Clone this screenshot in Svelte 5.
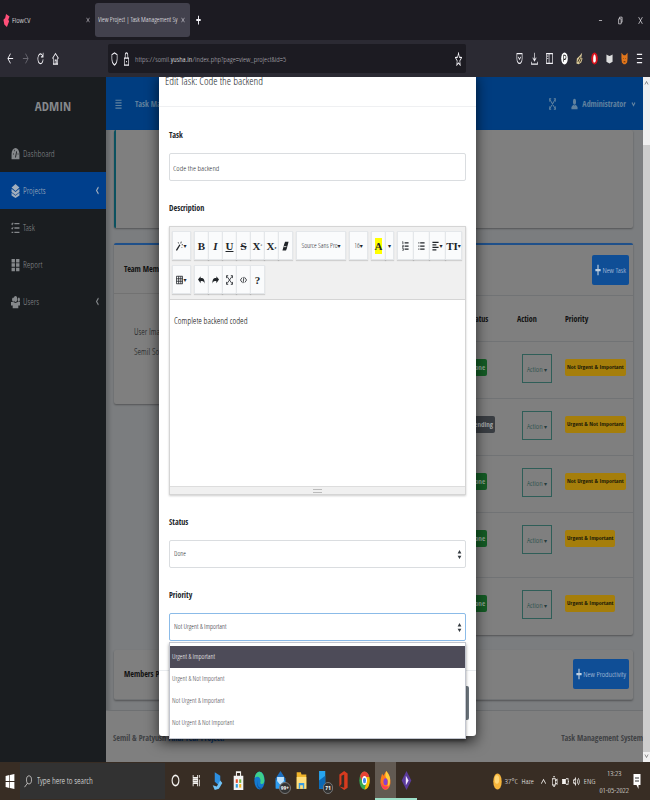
<script>
  const icons = {
    back: '<path d="M14 8H2M8 2L2 8l6 6"/>',
    forward: '<path d="M2 8h12M8 2l6 6-6 6"/>',
    reload: '<path d="M13 5A6 6 0 1 0 14 9M14 1v5H9"/>',
    home: '<path d="M1 8l7-6 7 6M3 7v8h10V7M7 15v-5h3v5"/>',
    shield: '<path d="M8 1l6 2v5c0 4-3 6-6 7-3-1-6-3-6-7V3z"/>',
    lock: '<path d="M3 7h10v8H3zM5 7V4a3 3 0 0 1 6 0v3M7 11h2"/>',
    star: '<path d="M8 1l2 5 5 .5-4 3.500 1 5L8 12.500 4 15l1-5-4-3.500L6 6z"/>',
    pocket: '<path d="M2 2h12v6a6 6 0 0 1-12 0zM5 6l3 3 3-3"/>',
    download: '<path d="M8 1v10M4 7l4 4 4-4M1 12v3h14v-3"/>',
    sidebar: '<path d="M1 2h14v12H1zM7 2v12M3 5h2M3 8h2"/>',
    parking: '<circle cx="8" cy="8" r="7.500" fill="#fff" stroke="none"/><path stroke="#222" d="M6 12V4h3a2 2 0 0 1 0 5H6"/>',
    bee: '<path fill="#d9c99a" stroke="none" d="M2 8l6-3 6-4-2 6 3 1-3 5-6 2-5-1z"/><path stroke="#3a2c18" d="M4 12l6-6M8 13l4-5"/>',
    adblock: '<circle cx="8" cy="8" r="7.500" fill="#d9121b" stroke="none"/><path fill="#fff" stroke="none" d="M5 7l1-3h1V3h2v1h1l1 3v4l-2 2H6l-1-2z"/>',
    reader: '<path fill="#ddd" stroke="none" d="M1 3l3 1 4 1 4-1 3-1v9l-3 1-4 1-4-1-3-1z"/>',
    fox: '<path fill="#e2761b" stroke="none" d="M1 1l5 3h4l5-3v7l-1 5-4 2H6l-4-2-1-5z"/><path stroke="#5b3212" d="M5 8h1M10 8h1M6 12h4"/>',
    menu: '<path d="M2 3h12M2 8h12M2 13h12"/>',
    bars: '<path d="M1 3h14M1 6.500h14M1 10h14M1 13.500h14"/>',
    minus: '<path d="M3 8h10"/>',
    restore: '<path d="M2 5h8v9H2zM5 5V2h8v9h-3"/>',
    cross: '<path d="M2 2l12 12M14 2L2 14"/>',
    gauge: '<path fill="currentColor" stroke="none" d="M8 1a7 7 0 0 0-7 7v6h14V8a7 7 0 0 0-7-7z"/><path stroke="#1a1d20" d="M8 12l2-7M4 8h1M6 4h1M12 8h1"/>',
    layers: '<path fill="currentColor" stroke="none" d="M8 0l7 4-7 4-7-4zM1 5.500l7 3.500 7-3.500v3.500l-7 3.500L1 9zM1 10l7 3.500 7-3.500v3l-7 3-7-3z"/>',
    tasks: '<path d="M6 3h9M6 8h9M6 13h9M1 3l1 1 2-2M1 8l1 1 2-2M1 13h3"/>',
    grid: '<path fill="currentColor" stroke="none" d="M1 1h6v4H1zM9 1h6v4H9zM1 6h6v4H1zM9 6h6v4H9zM1 11h6v4H1zM9 11h6v4H9z"/>',
    users: '<path fill="currentColor" stroke="none" d="M3 3a2 2.500 0 1 1 0 4.500A2 2.500 0 0 1 3 3zM13 3a2 2.500 0 1 1 0 4.500A2 2.500 0 0 1 13 3zM8 1a3 3.500 0 1 1 0 7 3 3.500 0 0 1 0-7zM0 12V8h4l4 1 4-1h4v4h-3v3H3v-3z"/>',
    user: '<path fill="currentColor" stroke="none" d="M8 1a3.500 4 0 1 1 0 8 3.500 4 0 0 1 0-8zM1 15v-3l4-3 3 1 3-1 4 3v3z"/>',
    expand: '<path d="M2 2l12 12M14 2L2 14M1 5V1h4M11 1h4v4M15 11v4h-4M5 15H1v-4"/>',
    left: '<path d="M11 2L5 8l6 6"/>',
    down: '<path d="M3 5l5 6 5-6"/>',
    up: '<path d="M3 11l5-6 5 6"/>',
    plus: '<path stroke-width="3" d="M8 1v14M1 8h14"/>',
    wand: '<path stroke-width="2.500" d="M1 15l8-9"/><path d="M11 4l1-3M13 6h3M5 2l1 2M13 10l1 1"/>',
    eraser: '<path fill="currentColor" stroke="none" d="M7 1h8l-4 11-2 3H1l4-10z"/><path stroke="#fff" d="M4 9h6"/>',
    ul: '<path stroke-width="2" d="M5 3h10M5 8h10M5 13h10M1 3h2M1 8h2M1 13h2"/>',
    ol: '<path stroke-width="2" d="M6 3h9M6 8h9M6 13h9"/><path d="M1 1h1v4M1 7h2v2H1v1h2M1 12h2v3H1"/>',
    align: '<path stroke-width="2" d="M1 2h14M1 6h9M1 10h14M1 14h9"/>',
    table: '<path d="M1 2h14v12H1zM1 6h14M1 10h14M6 2v12M11 2v12"/>',
    undo: '<path fill="currentColor" stroke="none" d="M0 7l6-5v3c6-1 10 2 9 9-1-4-4-5-9-4v3z"/>',
    redo: '<path fill="currentColor" stroke="none" d="M16 7l-6-5v3C4 4 0 7 1 14c1-4 4-5 9-4v3z"/>',
    code: '<path d="M5 4L1 8l4 4M11 4l4 4-4 4M9 3l-2 10"/>',
    sort: '<path fill="currentColor" stroke="none" d="M8 0l6 6H2zM8 16l6-6H2z"/>',
    flame: '<path fill="#ff4f79" stroke="none" d="M7 0l8 3-3 4 2 2-5 7-6-3-2-6 4-2z"/>',
    windows: '<path fill="#fff" stroke="none" d="M1 3l6-1v6H1zM8 2l7-1v7H8zM1 9h6v6l-6-1zM8 9h7v7l-7-1z"/>',
    search: '<circle cx="10" cy="6" r="5"/><path d="M7 10l-6 5"/>',
    cortana: '<ellipse cx="8" cy="8" rx="6" ry="5.500" stroke-width="2"/>',
    view: '<path d="M2 2v3h8V2M2 14v-3h8v3M2 7h8v2H2zM13 2v3M13 7v7"/>',
    stream: '<path fill="#2d8fe0" stroke="none" d="M4 1l8 3v9l-8-4z"/><path fill="#70c2f5" stroke="none" d="M1 12l6 1 5-5 3 2-5 5-6 1z"/>',
    store: '<path d="M5 5V1h6v4"/><path fill="#f3f3f3" stroke="none" d="M1 4h14v12H1z"/><path fill="#e74c2c" stroke="none" d="M4 7h3v3H4z"/><path fill="#6fb43f" stroke="none" d="M9 7h3v3H9z"/><path fill="#2b9be0" stroke="none" d="M4 11h3v3H4z"/><path fill="#f3b51d" stroke="none" d="M9 11h3v3H9z"/>',
    edge: '<circle cx="8" cy="8" r="7.500" fill="#1479cf" stroke="none"/><path fill="#3ed08b" stroke="none" d="M1 6c2-8 14-7 14 2 0 3-4 4-6 2 2-3-2-7-8-4z"/><path fill="#0b4f9e" stroke="none" d="M6 7c-3 4 1 8 6 7-5 3-10-2-6-7z"/>',
    mail: '<path fill="#1c6fc0" stroke="none" d="M1 6l7-6 7 6v8H1z"/><path fill="#bfe3fb" stroke="none" d="M3 5h10v4l-5 3-5-3z"/><path fill="#2e9df0" stroke="none" d="M1 7l7 5 7-5v8H1z"/>',
    folder: '<path fill="#f0b429" stroke="none" d="M1 1h6l1 2h7v12H1z"/><path fill="#ffdf7e" stroke="none" d="M1 5h14v10H1z"/><path fill="#3a9be0" stroke="none" d="M4 10h8v5h-2v-3H6v3H4z"/>',
    phone: '<path fill="#27a4ee" stroke="none" d="M3 0h9v15H3z"/><path fill="#0c69b5" stroke="none" d="M3 8l9-4v11H3z"/>',
    office: '<path fill="#d83b1f" stroke="none" d="M2 3l7-3 5 2v12l-5 2-7-3 7 1V3L5 4v7l-3 2z"/>',
    chrome: '<circle cx="8" cy="8" r="7.500" fill="#35a853" stroke="none"/><path fill="#e84335" stroke="none" d="M1.500 4.500a7.500 7.500 0 0 1 13.500.5H8L5 9z"/><path fill="#fabb05" stroke="none" d="M15 5a7.500 7.500 0 0 1-7 10.500L11 9 8 5z"/><circle cx="8" cy="8" r="3" fill="#4285f4" stroke="#fff"/>',
    firefox: '<path fill="#ff7a1a" stroke="none" d="M3 2l2 2 4-4c5 3 7 7 6 11-2 6-11 7-14 0C0 7 2 5 3 2z"/><path fill="#ffcf3b" stroke="none" d="M9 0c5 3 7 7 5 11-1 2-3 3-4 3 3-4 2-7-1-8-2-2-1-4 0-6z"/><circle cx="8" cy="9" r="3" fill="#8a3fd0" stroke="none"/><path fill="#ff3d5a" stroke="none" d="M1 9c3 4 8 5 12 3-3 5-10 5-12-3z"/>',
    diamond: '<path fill="#5b3b9d" stroke="none" d="M8 0l7 8-7 8-7-8z"/><path fill="#f2eaff" stroke="none" d="M7 4l4 4-4 4z"/>',
    sun: '<circle cx="8" cy="8" r="7.500" fill="#f6b53c" stroke="none"/><circle cx="7" cy="6" r="4" fill="#ffd778" stroke="none"/>',
    camera: '<path d="M3 4h7v9H3zM10 7l4-2v7l-4-2M5 1h4M5 15h4"/>',
    battery: '<path fill="currentColor" d="M1 5h7v6H1z"/><path d="M9 4h5v8H9M15 7v2"/>',
    sound: '<path d="M1 6h2l3-3v10L3 10H1zM9 5c2 2 2 4 0 6M12 3c3 3 3 7 0 10"/>',
    note: '<path fill="#fff" stroke="none" d="M1 1h14v11h-4v4l-4-4H1z"/><path stroke="#777" d="M4 5h8M4 8h8"/>'
  };
  const extensions = ['pocket', 'download', 'sidebar', 'parking', 'bee', 'adblock', 'reader', 'fox', 'menu'];
  const nav = [
    { name: 'Dashboard', icon: 'gauge' },
    { name: 'Projects', icon: 'layers', active: true, more: true },
    { name: 'Task', icon: 'tasks' },
    { name: 'Report', icon: 'grid' },
    { name: 'Users', icon: 'users', more: true }
  ];
  const tasks = [
    { status: 'Done', priority: 'Not Urgent & Important' },
    { status: 'Pending', priority: 'Urgent & Not Important' },
    { status: 'Done', priority: 'Not Urgent & Important' },
    { status: 'Done', priority: 'Urgent & Important', tall: true },
    { status: 'Done', priority: 'Urgent & Important' }
  ];
  const priorities = ['Urgent & Important', 'Urgent & Not Important', 'Not Urgent & Important', 'Not Urgent & Not Important'];
  const apps = [
    { icon: 'cortana' }, { icon: 'view' }, { icon: 'stream' }, { icon: 'store' }, { icon: 'edge' },
    { icon: 'mail', badge: '99+' }, { icon: 'folder' }, { icon: 'phone', badge: '71' }, { icon: 'office' },
    { icon: 'chrome' }, { icon: 'firefox', open: true, active: true }, { icon: 'diamond', open: true }
  ];
  let taskName = $state('Code the backend');
  let status = $state('Done');
  let priority = $state('Not Urgent & Important');
</script>

{#snippet icon(name)}
  <svg class="icon" viewBox="0 0 16 16" preserveAspectRatio="none" aria-hidden="true">{@html icons[name]}</svg>
{/snippet}

<div class="screen">
  <header class="browser">
    <div class="tabs">
      <div class="tab">
        {@render icon('flame')}<span>FlowCV</span>
        <button class="plain tiny" aria-label="Close tab">{@render icon('cross')}</button>
      </div>
      <div class="tab current">
        <span>View Project | Task Management Sy</span>
        <button class="plain tiny" aria-label="Close tab">{@render icon('cross')}</button>
      </div>
      <button class="plain add" aria-label="New tab">{@render icon('plus')}</button>
      <div class="window">
        <button class="plain" aria-label="Minimize">{@render icon('minus')}</button>
        <button class="plain" aria-label="Restore">{@render icon('restore')}</button>
        <button class="plain" aria-label="Close">{@render icon('cross')}</button>
      </div>
    </div>
    <div class="tools">
      <div class="history">
        <button class="plain" aria-label="Back">{@render icon('back')}</button>
        <button class="plain faded" aria-label="Forward">{@render icon('forward')}</button>
        <button class="plain" aria-label="Reload">{@render icon('reload')}</button>
        <button class="plain" aria-label="Home">{@render icon('home')}</button>
      </div>
      <div class="address">
        {@render icon('shield')}{@render icon('lock')}
        <span class="url">https://somil.<b>yusha.in</b>/index.php?page=view_project&amp;id=5</span>
        <button class="plain" aria-label="Bookmark">{@render icon('star')}</button>
      </div>
      <div class="extensions">
        {#each extensions as name}
          <button class="plain" aria-label={name}>{@render icon(name)}</button>
        {/each}
      </div>
    </div>
  </header>

  <div class="page">
    <aside>
      <div class="brand">ADMIN</div>
      <nav>
        {#each nav as item}
          <a href="#{item.name}" class:active={item.active}>
            {@render icon(item.icon)}<span>{item.name}</span>
            {#if item.more}<i>{@render icon('left')}</i>{/if}
          </a>
        {/each}
      </nav>
    </aside>

    <main>
      <div class="navbar">
        {@render icon('bars')}
        <b class="title">Task Management System</b>
        {@render icon('expand')}
        <span class="account">{@render icon('user')}<b>Administrator</b></span>
        {@render icon('down')}
      </div>
      <div class="content">
        <section class="card info"></section>
        <div class="columns">
          <section class="card outline team">
            <h2>Team Member/s:</h2>
            <p>User Image<br />Semil Soni</p>
          </section>
          <section class="card outline list">
            <div class="head"><button class="primary">{@render icon('plus')}New Task</button></div>
            <table>
              <thead><tr><th></th><th>Status</th><th>Action</th><th>Priority</th></tr></thead>
              <tbody>
                {#each tasks as task}
                  <tr class:tall={task.tall}>
                    <td></td>
                    <td><span class="badge {task.status.toLowerCase()}">{task.status}</span></td>
                    <td class="action"><button class="menu">Action <span>▾</span></button></td>
                    <td><span class="badge warn">{task.priority}</span></td>
                  </tr>
                {/each}
              </tbody>
            </table>
          </section>
        </div>
        <section class="card members">
          <h2>Members Progress</h2>
          <button class="primary">{@render icon('plus')}New Productivity</button>
        </section>
      </div>
      <footer>
        <b>Semil &amp; Pratyush <a href="#project">Final Year Project!</a></b>
        <b>Task Management System</b>
      </footer>
    </main>

    <div class="scroll">
      {@render icon('up')}
      <div class="thumb"></div>
      {@render icon('down')}
    </div>

    <div class="overlay">
      <div class="modal" role="dialog" aria-labelledby="modal-title">
        <h1 id="modal-title">Edit Task: Code the backend</h1>
        <form>
          <div class="field">
            <label for="task">Task</label>
            <input id="task" bind:value={taskName} />
          </div>
          <div class="field">
            <label for="description">Description</label>
            <div class="editor">
              <div class="toolbar">
                <div class="group wide"><button type="button" aria-label="Style">{@render icon('wand')}<em>▾</em></button></div>
                <div class="group">
                  <button type="button"><b>B</b></button>
                  <button type="button"><b class="italic">I</b></button>
                  <button type="button"><b class="under">U</b></button>
                  <button type="button"><b class="strike">S</b></button>
                  <button type="button"><b>X</b><sup>²</sup></button>
                  <button type="button"><b>X</b><sub>₂</sub></button>
                  <button type="button" aria-label="Clear">{@render icon('eraser')}</button>
                </div>
                <div class="group family"><button type="button">Source Sans Pro<em>▾</em></button></div>
                <div class="group wide"><button type="button">16<em>▾</em></button></div>
                <div class="group color"><button type="button"><b class="mark">A</b></button><button type="button" aria-label="More colors"><em>▾</em></button></div>
                <div class="group para">
                  <button type="button" aria-label="Numbers">{@render icon('ol')}</button>
                  <button type="button" aria-label="Bullets">{@render icon('ul')}</button>
                  <button type="button" aria-label="Paragraph">{@render icon('align')}<em>▾</em></button>
                  <button type="button"><b>TI</b><em>▾</em></button>
                </div>
                <div class="group wide"><button type="button" aria-label="Table">{@render icon('table')}<em>▾</em></button></div>
                <div class="group">
                  <button type="button" aria-label="Undo">{@render icon('undo')}</button>
                  <button type="button" aria-label="Redo">{@render icon('redo')}</button>
                  <button type="button" aria-label="Full screen">{@render icon('expand')}</button>
                  <button type="button" aria-label="Code">{@render icon('code')}</button>
                  <button type="button"><b>?</b></button>
                </div>
              </div>
              <textarea id="description">Complete backend coded</textarea>
              <div class="grip"><span></span></div>
            </div>
          </div>
          <div class="field">
            <label for="status">Status</label>
            <div class="select">
              <select id="status" bind:value={status}><option>Pending</option><option>Done</option></select>
              {@render icon('sort')}
            </div>
          </div>
          <div class="field">
            <label for="priority">Priority</label>
            <div class="select focus">
              <select id="priority" bind:value={priority}>
                {#each priorities as p}<option>{p}</option>{/each}
              </select>
              {@render icon('sort')}
              <ul role="listbox" aria-label="Priority">
                {#each priorities as p, i}
                  <li role="option" aria-selected={i === 0} class:hover={i === 0}>{p}</li>
                {/each}
              </ul>
            </div>
          </div>
        </form>
        <div class="modal-foot"><button class="cancel" aria-label="Cancel"></button></div>
      </div>
    </div>
  </div>

  <div class="taskbar">
    <button class="plain start" aria-label="Start">{@render icon('windows')}</button>
    <label class="search">{@render icon('search')}<input aria-label="Search" placeholder="Type here to search" /></label>
    <div class="apps">
      {#each apps as app}
        <button class="plain" class:open={app.open} class:active={app.active} aria-label={app.icon}>
          {@render icon(app.icon)}
          {#if app.badge}<span class="count">{app.badge}</span>{/if}
        </button>
      {/each}
    </div>
    <div class="tray">
      <span class="weather">{@render icon('sun')}37°C&nbsp; Haze</span>
      {@render icon('up')}{@render icon('camera')}{@render icon('battery')}{@render icon('sound')}
      <span>ENG</span>
      <span class="clock">13:23<br />01-05-2022</span>
      {@render icon('note')}
    </div>
  </div>
</div>

<style>
  :global(body) { margin: 0; background: #7b7d7f; }
  .screen, .screen :global(*) { box-sizing: border-box; }
  .screen {
    --bold: "Open Sans Condensed", "Liberation Sans Narrow", "Liberation Sans", sans-serif;
    display: flex; flex-direction: column; min-height: 100vh; overflow: hidden;
    font: 9px/12px "Open Sans Condensed Light", "Noto Sans ExtraCondensed", "Roboto Condensed", "Open Sans Condensed", sans-serif;
    color: #212529;
  }
  button, input, select, textarea { font: inherit; color: inherit; }
  button { padding: 0; white-space: nowrap; }
  .icon { width: 9px; height: 14px; flex: none; fill: none; stroke: currentColor; stroke-width: 1.500; display: block; }
  .plain { background: none; border: 0; display: flex; align-items: center; justify-content: center; }

  .browser { color: #f4f3f8; background: #1c1b22; }
  .tabs { height: 40px; display: flex; align-items: center; }
  .tab { width: 95px; height: 34px; padding: 0 5px 0 3px; display: flex; align-items: center; gap: 2px; font-size: 8px; }
  .tab .icon { width: 7px; height: 13px; }
  .tab span { flex: 1; min-width: 0; overflow: hidden; white-space: nowrap; }
  .tab .tiny .icon { width: 4px; height: 6px; }
  .current { background: #42414d; border-radius: 3px; font-size: 7px; }
  .add { width: 16px; }
  .add .icon { width: 5px; height: 10px; stroke-width: 1; }
  .window { margin-left: auto; display: flex; }
  .window button { width: 20px; }
  .window .icon { width: 5px; height: 9px; }
  .tools { height: 37px; background: #2b2a33; display: flex; align-items: center; padding: 0 3px; }
  .history { display: flex; width: 105px; }
  .history button { width: 15px; }
  .history .icon { width: 7px; height: 13px; }
  .history .faded { color: #6a6972; }
  .address { flex: 1; height: 29px; background: #1c1b22; border-radius: 2px; display: flex; align-items: center; gap: 5px; padding: 0 4px 0 3px; }
  .address .icon { width: 7px; height: 14px; }
  .url { flex: 1; color: #b4b3bb; white-space: nowrap; font-size: 8px; }
  .url b { color: #fff; font-weight: 400; }
  .extensions { display: flex; margin-left: 46px; }
  .extensions button { width: 15px; }
  .extensions .icon { width: 7px; height: 13px; }

  .page { flex: 1; display: flex; position: relative; overflow: hidden; background: #7b7d7f; }
  aside { width: 106px; background: #1a1d20; color: #85888b; }
  .brand { height: 58px; display: flex; align-items: center; justify-content: center; font: 700 13px/20px var(--bold); }
  nav a { height: 37px; display: flex; align-items: center; gap: 3px; padding: 0 6px 0 11px; color: inherit; text-decoration: none; }
  nav a span { flex: 1; }
  nav i .icon { width: 5px; height: 9px; stroke-width: 3; }
  nav .active { background: #003f8c; color: #a3afbd; }
  main { flex: 1; min-width: 0; display: flex; flex-direction: column; box-shadow: inset 3px 0 4px #0003; }
  .navbar { height: 53px; background: #003d80; color: #60829f; display: flex; align-items: center; padding: 0 7px 0 9px; gap: 5px; font: 8px/12px var(--bold); }
  .navbar .icon { width: 7px; height: 12px; }
  .navbar .title { flex: 1; padding-left: 8px; }
  .account { display: flex; align-items: center; gap: 4px; padding-left: 10px; }
  .navbar > .icon:last-child { width: 5px; height: 8px; stroke-width: 3; }
  .content { padding: 0 10px 10px 8px; display: flex; flex-direction: column; gap: 15px; }
  .card { background: #7f7f7f; border-radius: 2px; box-shadow: 0 1px 2px #0005; }
  .info { height: 98px; border-left: 2px solid #0b5260; }
  .columns { display: grid; grid-template-columns: 1fr 2fr; gap: 15px; align-items: start; }
  .outline { border-top: 2px solid #1f508a; }
  h2 { margin: 0; font: 700 8px/48px var(--bold); color: #111; white-space: nowrap; }
  .team { height: 161px; }
  .team h2 { padding-left: 10px; border-bottom: 1px solid #727272; }
  .team p { margin: 28px 0 0 20px; line-height: 20px; color: #16181a; }
  .head { height: 50px; display: flex; align-items: center; justify-content: flex-end; padding-right: 4px; }
  .primary { height: 30px; padding: 0 3px; border: 0; border-radius: 2px; background: #0f4e96; color: #c0d0e0; display: flex; align-items: center; gap: 1px; font-size: 8px; }
  .primary .icon { width: 6px; height: 12px; stroke-width: 1; }
  table { width: 100%; border-collapse: collapse; table-layout: fixed; }
  th { height: 46px; padding: 0; text-align: left; font: 700 8px/12px var(--bold); color: #111; border-top: 1px solid #717375; width: 48px; }
  th:first-child { width: auto; }
  th:last-child { width: 68px; }
  td { height: 57px; padding: 12px 0 0; vertical-align: top; border-top: 1px solid #717375; white-space: nowrap; }
  .tall td { height: 65px; }
  .action { padding-left: 5px; }
  .menu { width: 30px; height: 29px; border: 1px solid #2f5e58; background: none; color: #0f443e; font-size: 8px; }
  .menu span { font: 6px/8px "DejaVu Sans", sans-serif; color: #263b3b; }
  .badge { display: inline-block; margin-top: 5px; padding: 0 2px; border-radius: 2px; font: 700 6px/17px var(--bold); }
  .warn { background: #a57e0b; color: #211b08; }
  .done, .pending { padding: 0 2px; font-size: 7px; }
  .done { background: #145c25; color: #8fa395; }
  .pending { background: #393d42; color: #a0a3a6; }
  .members { height: 50px; display: flex; align-items: center; justify-content: space-between; padding: 0 4px 0 10px; border-bottom: 1px solid #717375; }
  footer { flex: 1; min-height: 50px; padding: 4px 0 0 7px; display: flex; justify-content: space-between; align-items: center; color: #3f4245; border-top: 1px solid #6e7072; background: #7f7f7f; white-space: nowrap; font: 8px/12px var(--bold); }
  footer a { color: #0b3f7c; text-decoration: none; }
  .scroll { width: 7px; background: #f0f0f0; color: #555; display: flex; flex-direction: column; align-items: center; justify-content: space-between; padding: 2px 0; }
  .scroll .icon { width: 5px; height: 8px; }
  .thumb { width: 100%; flex: 1; background: #cdcdcd; margin: 58px 0 0; }

  .overlay { position: absolute; inset: 0 15px 0 0; display: flex; justify-content: center; align-items: flex-start; pointer-events: none; }
  .modal { width: 317px; max-width: 100%; margin-top: -6px; background: #fff; border-radius: 0 0 3px 3px; box-shadow: 0 6px 14px #000a; pointer-events: auto; }
  h1 { margin: 0; height: 36px; padding: 0 6px; font-size: 11px; line-height: 20px; font-weight: 400; border-bottom: 1px solid #eff0f2; }
  form { padding: 18px 10px 0; display: flex; flex-direction: column; gap: 17px; }
  .field { display: flex; flex-direction: column; gap: 8px; }
  .field label { font: 700 8px/20px var(--bold); }
  .field > input, select { width: 100%; height: 28px; padding: 0 4px; border: 1px solid #dadde0; border-radius: 2px; background: #fff; color: #212529; font-size: 7px; }
  .field > input { padding: 0 3px; font-size: 8px; }
  .select { position: relative; display: flex; align-items: center; }
  select { appearance: none; }
  .select > .icon { position: absolute; right: 4px; width: 5px; height: 9px; color: #343a40; }
  .focus select { border-color: #8bbbe8; }
  ul { position: absolute; top: 29px; left: 0; right: 0; margin: 0; padding: 3px 0 4px; list-style: none; background: #fff; border: 1px solid #c3c6cf; font-size: 7px; color: #3a3a40; box-shadow: 0 2px 3px #0006; }
  li { height: 22px; line-height: 22px; padding: 0 2px; }
  .hover { background: #4d4b58; color: #fff; }
  .editor { border: 1px solid #d5d5d5; box-shadow: 0 1px 2px #0003; }
  .toolbar { background: #f0f0f0; border-bottom: 1px solid #d5d5d5; padding: 4px 1px 5px 2px; display: flex; flex-wrap: wrap; gap: 5px 3px; }
  .group { display: flex; }
  .group button { width: 15px; height: 29px; margin-left: -1px; display: flex; align-items: center; justify-content: center; border: 1px solid #e4e7ea; background: #fafbfc; font-size: 7px; color: #212529; box-shadow: 0 1px 1px #0002; }
  .group button:first-child { margin-left: 0; }
  .group .icon { width: 7px; height: 10px; }
  .group b { font: 700 11px/14px "Liberation Serif", serif; }
  .group em { font: 6px/8px "DejaVu Sans", sans-serif; }
  .group sup, .group sub { font-size: 6px; line-height: 6px; }
  .wide button { width: 19px; }
  .family button { width: 50px; }
  .group.color button:last-child { width: 9px; }
  .para button { width: 17px; }
  .group .italic { font-style: italic; }
  .group .under { text-decoration: underline; }
  .group .strike { text-decoration: line-through; }
  .group .mark { background: #ff0; padding: 1px 0; }
  textarea { display: block; width: 100%; height: 186px; border: 0; padding: 15px 4px; resize: none; background: #fff; outline: 0; color: #000; }
  .grip { height: 8px; background: #f0f0f0; border-top: 1px solid #ddd; display: flex; justify-content: center; align-items: center; }
  .grip span { width: 9px; height: 4px; border: solid #bbb; border-width: 1px 0; }
  .modal-foot { margin-top: 29px; height: 66px; padding: 15px 7px; border-top: 1px solid #e9ecef; display: flex; justify-content: flex-end; }
  .cancel { width: 34px; height: 34px; border: 0; border-radius: 2px; background: #6c757d; }

  .taskbar { height: 38px; background: #382d24; color: #f4f2ef; display: flex; align-items: center; }
  .start { width: 20px; }
  .taskbar .icon { width: 10px; height: 16px; }
  .taskbar .search { width: 145px; height: 36px; background: #323232; display: flex; align-items: center; gap: 5px; padding-left: 4px; }
  .search .icon { width: 8px; height: 13px; stroke-width: 1; }
  .search input { flex: 1; min-width: 0; border: 0; padding: 0; background: none; }
  .search input::placeholder { color: #e6e6e6; opacity: 1; }
  .apps { display: flex; align-self: stretch; }
  .apps button { width: 21px; position: relative; border-bottom: 2px solid transparent; }
  .apps .icon { width: 11px; height: 19px; }
  .apps button:first-child .icon, .apps button:nth-child(2) .icon { width: 9px; height: 15px; }
  .apps .open { border-bottom-color: #9de0c8; }
  .apps .active { background: #625a52; }
  .count { position: absolute; right: 0; bottom: 4px; min-width: 10px; padding: 0 1px; border-radius: 6px; background: #333; color: #fff; border: 1px solid #777; font: 700 6px/10px var(--bold); }
  .tray { flex: 1; display: flex; align-items: center; justify-content: flex-end; gap: 4px; padding-right: 9px; font-size: 8px; white-space: nowrap; }
  .tray .icon { width: 7px; height: 11px; }
  .weather { display: flex; align-items: center; gap: 3px; margin-right: 2px; }
  .tray .weather .icon { width: 9px; height: 17px; }
  .clock { text-align: center; line-height: 17px; }
  .tray > .icon:last-child { width: 8px; height: 16px; }
</style>
